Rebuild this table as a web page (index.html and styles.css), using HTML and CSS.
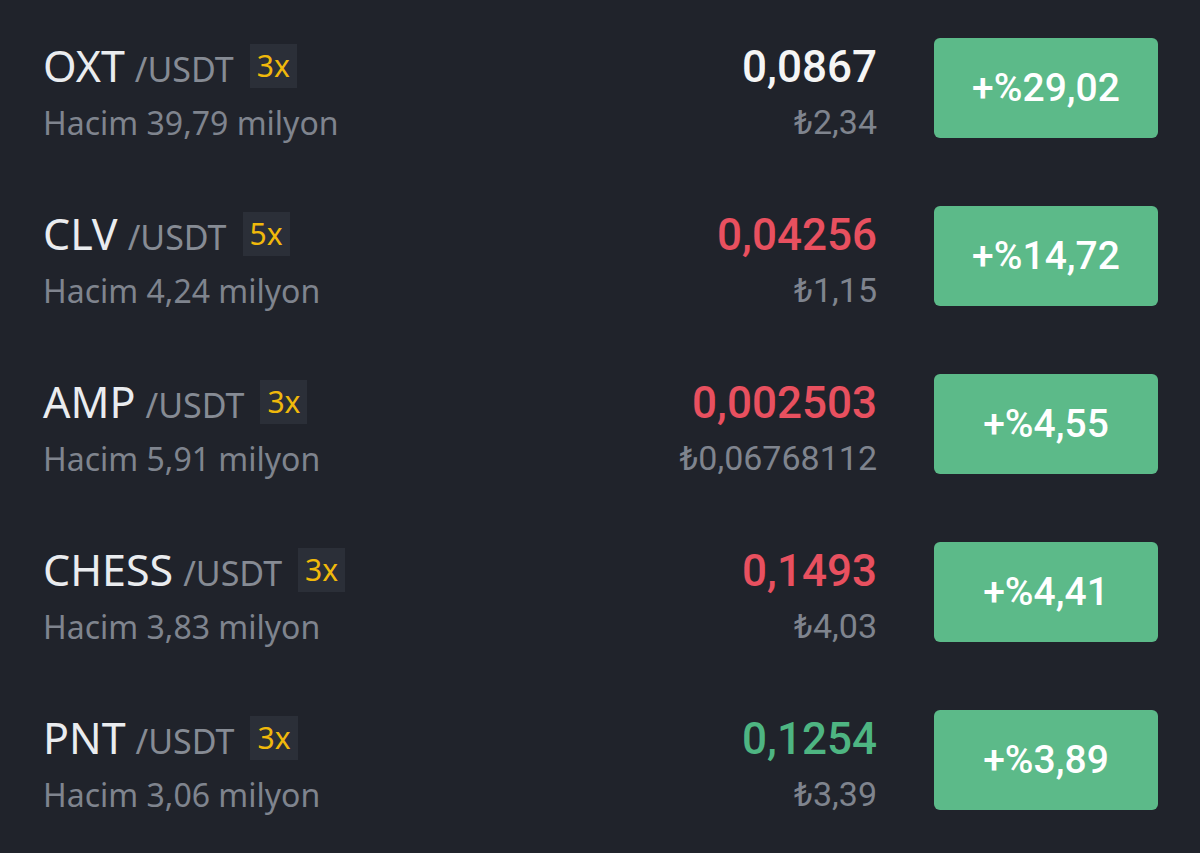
FILE: index.html
```html
<!DOCTYPE html>
<html lang="tr">
<head>
  <meta charset="UTF-8" />
  <title>Piyasa</title>
  <link rel="stylesheet" href="styles.css">
</head>
<body>
  <div class="list">
    <div class="row">
      <div class="coin">
        <div class="pair"><span class="sym">OXT</span><span class="quote">/USDT</span><span class="lev">3x</span></div>
        <div class="vol">Hacim 39,79 milyon</div>
      </div>
      <div class="price">
        <div class="last">0,0867</div>
        <div class="fiat">₺2,34</div>
      </div>
      <div class="chg">+%29,02</div>
    </div>
    <div class="row">
      <div class="coin">
        <div class="pair"><span class="sym">CLV</span><span class="quote">/USDT</span><span class="lev">5x</span></div>
        <div class="vol">Hacim 4,24 milyon</div>
      </div>
      <div class="price">
        <div class="last down">0,04256</div>
        <div class="fiat">₺1,15</div>
      </div>
      <div class="chg">+%14,72</div>
    </div>
    <div class="row">
      <div class="coin">
        <div class="pair"><span class="sym">AMP</span><span class="quote">/USDT</span><span class="lev">3x</span></div>
        <div class="vol">Hacim 5,91 milyon</div>
      </div>
      <div class="price">
        <div class="last down">0,002503</div>
        <div class="fiat">₺0,06768112</div>
      </div>
      <div class="chg">+%4,55</div>
    </div>
    <div class="row">
      <div class="coin">
        <div class="pair"><span class="sym">CHESS</span><span class="quote">/USDT</span><span class="lev">3x</span></div>
        <div class="vol">Hacim 3,83 milyon</div>
      </div>
      <div class="price">
        <div class="last down">0,1493</div>
        <div class="fiat">₺4,03</div>
      </div>
      <div class="chg">+%4,41</div>
    </div>
    <div class="row">
      <div class="coin">
        <div class="pair"><span class="sym">PNT</span><span class="quote">/USDT</span><span class="lev">3x</span></div>
        <div class="vol">Hacim 3,06 milyon</div>
      </div>
      <div class="price">
        <div class="last up">0,1254</div>
        <div class="fiat">₺3,39</div>
      </div>
      <div class="chg">+%3,89</div>
    </div>
  </div>
</body>
</html>
```

FILE: styles.css
```css
body {
  margin: 0;
  padding: 0;
  background: #20232b;
  color: #eaecef;
  font-family: 'Noto Sans', sans-serif;
}
.list {
  padding-top: 4px;
}
.row {
  display: flex;
  align-items: flex-start;
  height: 168px;
  box-sizing: border-box;
  padding: 34px 42px 0 43px;
}
.coin {
  flex: 1;
  margin-top: 2px;
}
.pair {
  display: flex;
  align-items: baseline;
  height: 52px;
  line-height: 52px;
}
.sym {
  font-size: 43px;
  color: #eaecef;
}
.quote {
  font-size: 34px;
  color: #868b94;
  margin-left: 10px;
}
.lev {
  align-self: center;
  margin-left: 16px;
  background: #2b2f38;
  color: #f0b90b;
  font-size: 30px;
  height: 44px;
  line-height: 44px;
  padding: 0 7px;
  box-sizing: border-box;
}
.vol {
  margin-top: 11px;
  font-size: 32px;
  line-height: 40px;
  color: #7f848e;
}
.price {
  text-align: right;
  margin-right: 57px;
  margin-top: 3px;
  font-family: Roboto, sans-serif;
}
.last {
  font-size: 44px;
  font-weight: 500;
  line-height: 52px;
  color: #f5f5f5;
}
.last.down {
  color: #e8505f;
}
.last.up {
  color: #4eb582;
}
.fiat {
  margin-top: 9px;
  font-size: 34px;
  line-height: 40px;
  color: #7f848e;
}
.chg {
  width: 224px;
  height: 100px;
  border-radius: 6px;
  background: #5cba89;
  color: #fff;
  font-family: Roboto, sans-serif;
  font-size: 39px;
  font-weight: 500;
  display: flex;
  align-items: center;
  justify-content: center;
}
```
